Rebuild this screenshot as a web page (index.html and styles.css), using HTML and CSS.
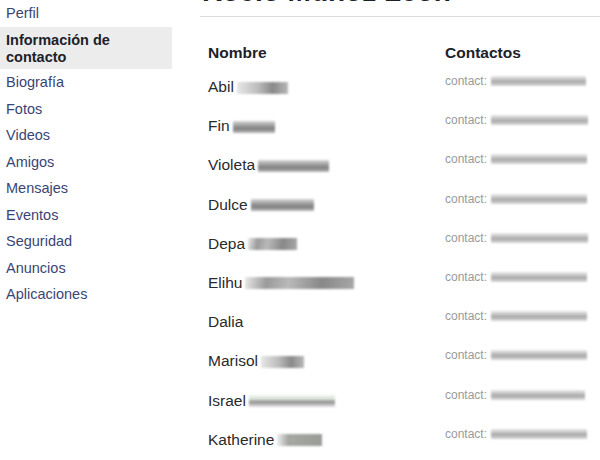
FILE: index.html
```html
<!DOCTYPE html>
<html lang="es">
<head>
<meta charset="utf-8">
<title>Información de contacto</title>
<link rel="stylesheet" href="styles.css">
</head>
<body>
<div class="page">
  <nav class="sidebar">
    <a class="item">Perfil</a>
    <a class="item active">Información de contacto</a>
    <a class="item">Biografía</a>
    <a class="item">Fotos</a>
    <a class="item">Videos</a>
    <a class="item">Amigos</a>
    <a class="item">Mensajes</a>
    <a class="item">Eventos</a>
    <a class="item">Seguridad</a>
    <a class="item">Anuncios</a>
    <a class="item">Aplicaciones</a>
  </nav>
  <main class="main">
    <h1 class="title">Rocío Muñoz León</h1>
    <div class="table">
      <div class="head">
        <div class="hname">Nombre</div>
        <div class="hcontact">Contactos</div>
      </div>
      <div class="row"><div class="name">Abil<span class="blur b1" style="width:51px"></span></div><div class="contact">contact:<span class="cblur" style="width:95px"></span></div></div>
      <div class="row"><div class="name">Fin<span class="blur b2" style="width:42px"></span></div><div class="contact">contact:<span class="cblur" style="width:97px"></span></div></div>
      <div class="row"><div class="name">Violeta<span class="blur b2" style="width:71px"></span></div><div class="contact">contact:<span class="cblur" style="width:96px"></span></div></div>
      <div class="row"><div class="name">Dulce<span class="blur b2" style="width:63px"></span></div><div class="contact">contact:<span class="cblur" style="width:96px"></span></div></div>
      <div class="row"><div class="name">Depa<span class="blur b3" style="width:49px"></span></div><div class="contact">contact:<span class="cblur" style="width:97px"></span></div></div>
      <div class="row"><div class="name">Elihu<span class="blur b3" style="width:109px"></span></div><div class="contact">contact:<span class="cblur" style="width:96px"></span></div></div>
      <div class="row"><div class="name">Dalia</div><div class="contact">contact:<span class="cblur" style="width:96px"></span></div></div>
      <div class="row"><div class="name">Marisol<span class="blur b1" style="width:43px"></span></div><div class="contact">contact:<span class="cblur" style="width:96px"></span></div></div>
      <div class="row"><div class="name">Israel<span class="blur b4" style="width:86px"></span></div><div class="contact">contact:<span class="cblur" style="width:94px"></span></div></div>
      <div class="row"><div class="name">Katherine<span class="blur b5" style="width:45px"></span></div><div class="contact">contact:<span class="cblur" style="width:96px"></span></div></div>
    </div>
  </main>
</div>
</body>
</html>
```

FILE: styles.css
```css
html, body {
  margin: 0;
  padding: 0;
  background: #ffffff;
  overflow: hidden;
}
body {
  font-family: "Liberation Sans", Arial, sans-serif;
  width: 600px;
  height: 460px;
}
.page {
  display: flex;
  gap: 28px;
}
.sidebar {
  width: 172px;
  flex: none;
  display: flex;
  flex-direction: column;
}
.item {
  display: block;
  font-size: 14.5px;
  line-height: 26.5px;
  height: 26.5px;
  padding-left: 6px;
  color: #3a4573;
  text-decoration: none;
}
.item.active {
  height: auto;
  background: #ececec;
  color: #1d2129;
  font-weight: bold;
  line-height: 16.5px;
  padding: 5px 40px 4px 6px;
  margin-top: 0.5px;
}
.main {
  flex: 1;
  min-width: 0;
}
.title {
  margin: -22px 0 0 0;
  padding: 0 0 10px 2px;
  font-size: 28px;
  line-height: 28px;
  font-weight: bold;
  color: #1d2129;
  border-bottom: 1px solid #dcdcdc;
  white-space: nowrap;
}
.table {
  margin-top: 26px;
  padding-left: 8px;
}
.head {
  display: grid;
  grid-template-columns: 237px 1fr;
  height: 24px;
  font-size: 15.5px;
  line-height: 20px;
  font-weight: bold;
  color: #1d2129;
}
.row {
  display: grid;
  grid-template-columns: 237px 1fr;
  height: 39.2px;
}
.name {
  padding-top: 10px;
  font-size: 15.5px;
  line-height: 20px;
  color: #2a2a2a;
  display: flex;
  align-items: center;
  align-self: start;
  white-space: nowrap;
}
.contact {
  padding-top: 7px;
  font-size: 12px;
  line-height: 14px;
  color: #9a9a9a;
  display: flex;
  align-items: center;
  align-self: start;
  white-space: nowrap;
}
.blur {
  display: inline-block;
  height: 12px;
  margin-left: 3px;
  margin-top: 1px;
  filter: blur(1.2px);
  background: linear-gradient(180deg, #dcdcdc 0%, #a9a9a9 45%, #8f8f8f 60%, #c6c6c6 100%);
}
.b1 { background: linear-gradient(90deg, #e6e6e6 0%, #bdbdbd 40%, #8a8a8a 70%, #b8b8b8 100%); }
.b2 { background: linear-gradient(180deg, #d6d6d6 0%, #9c9c9c 40%, #7f7f7f 65%, #bcbcbc 100%); }
.b3 { background: linear-gradient(100deg, #e8ecea 0%, #9a9a9a 20%, #b9b9b9 40%, #888888 70%, #a8a8a8 100%); }
.b4 { background: linear-gradient(180deg, #f2f6f1 0%, #d2dcd2 40%, #8c8c8c 55%, #e4e4e4 100%); }
.b5 { background: linear-gradient(90deg, #eeeeee 0%, #a5a7a3 25%, #9a9c98 100%); }
.cblur {
  display: inline-block;
  height: 10px;
  margin-left: 4px;
  filter: blur(1.3px);
  background: linear-gradient(180deg, #ebebeb 0%, #c4c4c4 35%, #a8a8a8 55%, #dadada 100%);
}
```
